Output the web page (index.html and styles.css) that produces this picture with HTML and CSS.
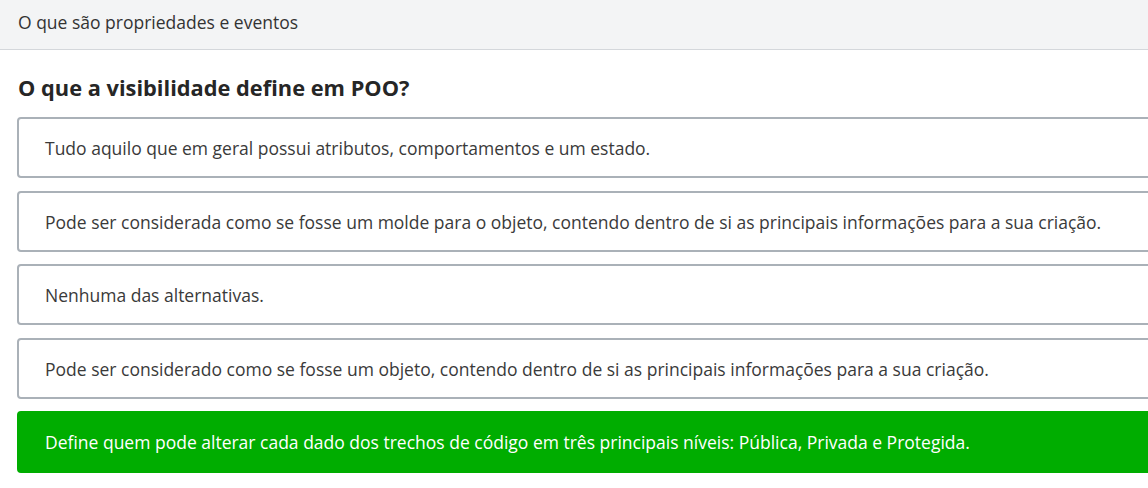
FILE: index.html
```html
<!DOCTYPE html>
<html lang="pt">
<head>
<meta charset="utf-8">
<link rel="stylesheet" href="styles.css">
</head>
<body>
<header class="topbar">O que são propriedades e eventos</header>
<main class="content">
  <h2 class="question">O que a visibilidade define em POO?</h2>
  <div class="options">
    <div class="option">Tudo aquilo que em geral possui atributos, comportamentos e um estado.</div>
    <div class="option">Pode ser considerada como se fosse um molde para o objeto, contendo dentro de si as principais informações para a sua criação.</div>
    <div class="option">Nenhuma das alternativas.</div>
    <div class="option">Pode ser considerado como se fosse um objeto, contendo dentro de si as principais informações para a sua criação.</div>
    <div class="option correct">Define quem pode alterar cada dado dos trechos de código em três principais níveis: Pública, Privada e Protegida.</div>
  </div>
</main>
</body>
</html>
```
FILE: styles.css
```css
html, body {
  margin: 0;
  padding: 0;
  background: #ffffff;
  overflow: hidden;
}
body {
  font-family: "Open Sans", "Noto Sans", sans-serif;
  color: #333;
  width: 1148px;
  height: 488px;
}
.topbar {
  box-sizing: border-box;
  background: #f3f4f5;
  border-bottom: 1px solid #d4d7db;
  height: 50px;
  padding: 0 18px 6px;
  display: flex;
  align-items: center;
  font-size: 17.5px;
  color: #333;
}
.content {
  padding: 0 0 0 17px;
  width: 1180px;
}
.question {
  margin: 0;
  padding: 24px 0 0 1px;
  height: 67px;
  box-sizing: border-box;
  font-size: 21.8px;
  font-weight: 700;
  color: #262626;
  line-height: 28px;
}
.options {
  display: flex;
  flex-direction: column;
  gap: 12.5px;
}
.option {
  border: 2px solid #aab1b8;
  border-radius: 4px;
  padding: 17px 26px 16px;
  font-size: 17.5px;
  line-height: 24px;
  color: #3a3a3a;
}
.option.correct {
  background: #00ad00;
  border-color: #00ad00;
  color: #ffffff;
  font-weight: 500;
  font-size: 17.5px;
  padding-top: 17px;
  padding-bottom: 17px;
}
```
